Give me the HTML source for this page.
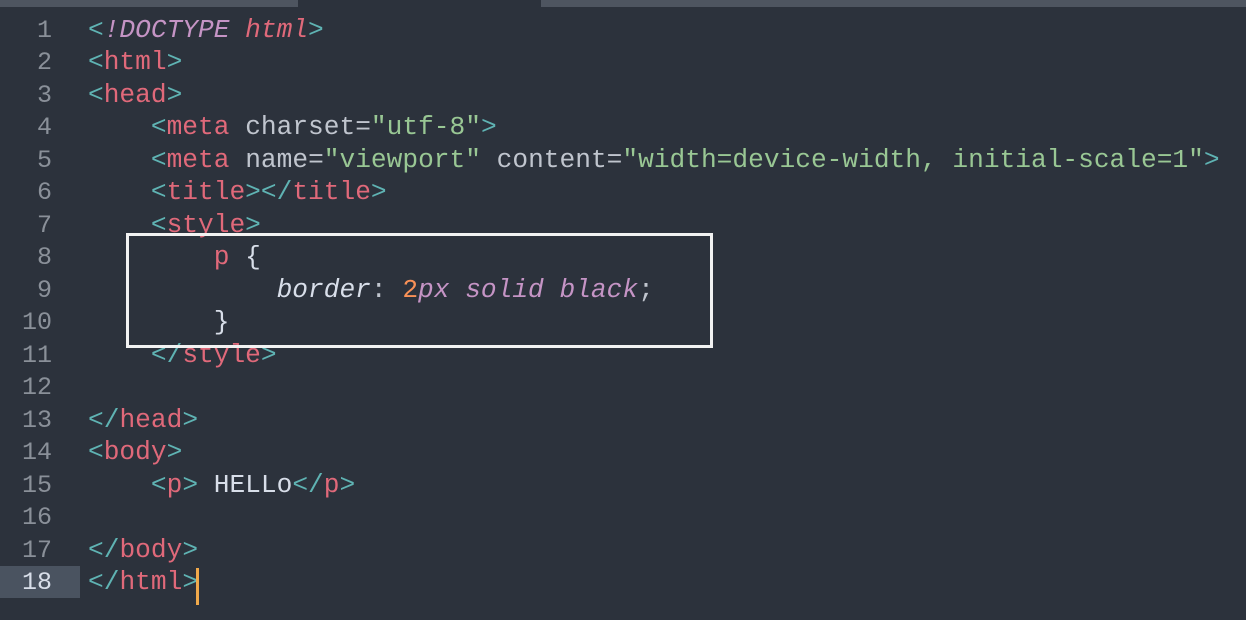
<!DOCTYPE html>
<html><head><style>
body{margin:0;width:1246px;height:620px;background:#2c323c;overflow:hidden;position:relative;font-family:"Liberation Mono","DejaVu Sans Mono",monospace;}
.tb1{position:absolute;left:0;top:0;width:298px;height:7px;background:#4e5560}
.tb2{position:absolute;left:541px;top:0;width:705px;height:7px;background:#4e5560}
.hl{position:absolute;left:0;top:566px;width:80px;height:32px;background:#4a5360}
.ln{position:absolute;left:0;width:52px;text-align:right;color:#8a9099;font-size:25px}
.code{position:absolute;left:88px;font-size:26.2px;white-space:pre;color:#c0c5ce}
.t{color:#e0697a}.b{color:#5fb3b3}.s{color:#99c794}.i{color:#c594c5;font-style:italic}.a{color:#c0c5ce}.n{color:#f99157}.w{color:#d8dee9}
.box{position:absolute;left:126px;top:233px;width:581px;height:109px;border:3px solid #f2f2f2}
.cur{position:absolute;left:196px;top:568px;width:3px;height:37px;background:#f0a94b}
</style></head><body>
<div class="tb1"></div><div class="tb2"></div><div class="hl"></div>
<div class="ln" style="top:16px">1</div>
<div class="ln" style="top:48px">2</div>
<div class="ln" style="top:81px">3</div>
<div class="ln" style="top:113px">4</div>
<div class="ln" style="top:146px">5</div>
<div class="ln" style="top:178px">6</div>
<div class="ln" style="top:211px">7</div>
<div class="ln" style="top:243px">8</div>
<div class="ln" style="top:276px">9</div>
<div class="ln" style="top:308px">10</div>
<div class="ln" style="top:341px">11</div>
<div class="ln" style="top:373px">12</div>
<div class="ln" style="top:406px">13</div>
<div class="ln" style="top:438px">14</div>
<div class="ln" style="top:471px">15</div>
<div class="ln" style="top:503px">16</div>
<div class="ln" style="top:536px">17</div>
<div class="ln" style="top:568px;color:#d8dee9">18</div>
<div class="code" style="top:15px"><span class="b">&lt;</span><span class="i">!DOCTYPE</span> <span class="t" style="font-style:italic">html</span><span class="b">&gt;</span></div>
<div class="code" style="top:47px"><span class="b">&lt;</span><span class="t">html</span><span class="b">&gt;</span></div>
<div class="code" style="top:80px"><span class="b">&lt;</span><span class="t">head</span><span class="b">&gt;</span></div>
<div class="code" style="top:112px">    <span class="b">&lt;</span><span class="t">meta</span> <span class="a">charset</span>=<span class="s">"utf-8"</span><span class="b">&gt;</span></div>
<div class="code" style="top:145px">    <span class="b">&lt;</span><span class="t">meta</span> <span class="a">name</span>=<span class="s">"viewport"</span> <span class="a">content</span>=<span class="s">"width=device-width, initial-scale=1"</span><span class="b">&gt;</span></div>
<div class="code" style="top:177px">    <span class="b">&lt;</span><span class="t">title</span><span class="b">&gt;&lt;/</span><span class="t">title</span><span class="b">&gt;</span></div>
<div class="code" style="top:210px">    <span class="b">&lt;</span><span class="t">style</span><span class="b">&gt;</span></div>
<div class="code" style="top:242px">        <span class="t">p</span> <span class="w">{</span></div>
<div class="code" style="top:275px">            <span class="w" style="font-style:italic">border</span>: <span class="n">2</span><span class="i">px solid black</span>;</div>
<div class="code" style="top:307px">        <span class="w">}</span></div>
<div class="code" style="top:340px">    <span class="b">&lt;/</span><span class="t">style</span><span class="b">&gt;</span></div>
<div class="code" style="top:405px"><span class="b">&lt;/</span><span class="t">head</span><span class="b">&gt;</span></div>
<div class="code" style="top:437px"><span class="b">&lt;</span><span class="t">body</span><span class="b">&gt;</span></div>
<div class="code" style="top:470px">    <span class="b">&lt;</span><span class="t">p</span><span class="b">&gt;</span> <span class="w">HELLo</span><span class="b">&lt;/</span><span class="t">p</span><span class="b">&gt;</span></div>
<div class="code" style="top:535px"><span class="b">&lt;/</span><span class="t">body</span><span class="b">&gt;</span></div>
<div class="code" style="top:567px"><span class="b">&lt;/</span><span class="t">html</span><span class="b">&gt;</span></div>
<div class="box"></div>
<div class="cur"></div>
</body></html>
